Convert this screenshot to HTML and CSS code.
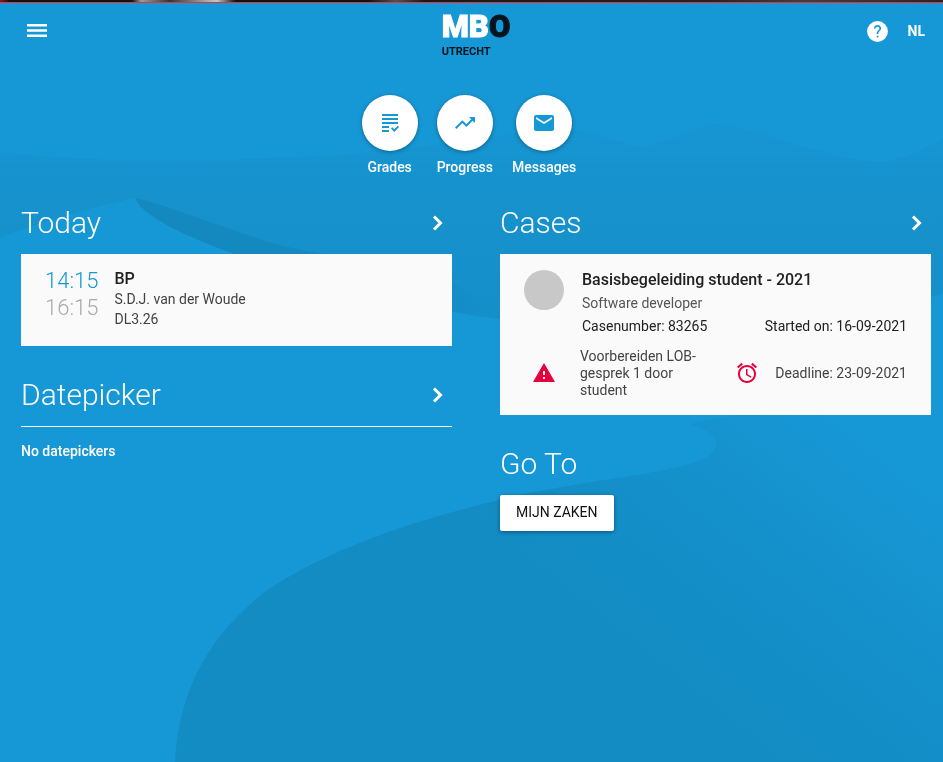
FILE: index.html
```html
<!DOCTYPE html>
<html lang="en">
<head>
<meta charset="utf-8">
<meta name="viewport" content="width=device-width, initial-scale=1">
<title>MBO Utrecht</title>
<link rel="stylesheet" href="styles.css">
</head>
<body>
<svg class="backdrop" viewBox="0 0 943 762" preserveAspectRatio="none" aria-hidden="true">
  <defs>
    <linearGradient id="ridge" x1="0" y1="124" x2="0" y2="320" gradientUnits="userSpaceOnUse">
      <stop offset="0" stop-color="#1694d0" stop-opacity=".6"/>
      <stop offset=".35" stop-color="#1692cd"/>
      <stop offset="1" stop-color="#158fca"/>
    </linearGradient>
    <linearGradient id="streak" x1="135" y1="0" x2="500" y2="0" gradientUnits="userSpaceOnUse">
      <stop offset="0" stop-color="#1389c0"/>
      <stop offset=".5" stop-color="#1389c0"/>
      <stop offset="1" stop-color="#158fca"/>
    </linearGradient>
    <linearGradient id="dune" x1="640" y1="660" x2="840" y2="410" gradientUnits="userSpaceOnUse">
      <stop offset="0" stop-color="#138bc3"/>
      <stop offset=".5" stop-color="#1490ca"/>
      <stop offset="1" stop-color="#1798d6"/>
    </linearGradient>
  </defs>
  <path fill="url(#ridge)" d="M0 151C90 164 220 162 350 154C430 148 510 130 575 130C600 131 625 147 645 146C672 143 692 124 718 124C760 128 820 158 880 162C905 160 925 148 943 139V294C800 326 620 334 500 319C380 304 210 252 135 198C90 208 40 222 0 238Z"/>
  <path fill="url(#streak)" d="M135 198C190 210 260 248 340 256C420 262 480 290 500 319C380 304 150 240 135 198Z"/>
  <path fill="url(#dune)" d="M175 762C179 690 208 638 262 594C330 545 440 513 520 495C590 480 640 477 690 464C725 454 725 434 690 424C760 405 870 410 943 430V762Z"/>
</svg>
<div class="strip"></div>
<header class="topbar">
  <button class="icon-button menu" aria-label="Menu">
    <svg width="20" height="14" viewBox="0 0 20 14" fill="#fff"><path d="M0 0h20v2.600H0zM0 5.200h20v2.600H0zM0 10.400h20V13H0z"/></svg>
  </button>
  <a class="logo" href="#" aria-label="MBO Utrecht">
    <span class="logo-name">MB<b>O</b></span>
    <span class="logo-city">UTRECHT</span>
  </a>
  <div class="tools">
    <button class="icon-button" aria-label="Help">
      <svg width="25" height="25" viewBox="0 0 24 24"><circle cx="12" cy="12" r="10" fill="#fff"/><path fill="#1798d6" d="M11.200 16h1.700v1.800h-1.700zM14.700 10.800l-.8.850c-.7.700-1 1.250-1 2.750h-1.700v-.5c0-1 .4-1.900 1.050-2.550l1.050-1.100c.3-.3.500-.7.500-1.200 0-1-.8-1.700-1.750-1.700s-1.750.8-1.750 1.700H8.600c0-1.900 1.550-3.400 3.450-3.400s3.450 1.500 3.450 3.400c0 .7-.3 1.300-.8 1.750z"/></svg>
    </button>
    <button class="language">NL</button>
  </div>
</header>

<nav class="shortcuts">
  <a class="shortcut" href="#">
    <span class="disc"><svg width="24" height="24" viewBox="0 0 24 24" fill="#1798d6"><path d="M4 3h16v2H4zM4 7h16v2H4zM4 11h16v2H4zM4 15h7v2H4zM4 19h7v2H4zM13 17.500l1.300-1.300 2 2 3.500-3.500 1.300 1.300-4.800 4.900z"/></svg></span>
    Grades
  </a>
  <a class="shortcut" href="#">
    <span class="disc"><svg width="24" height="24" viewBox="0 0 24 24" fill="#1798d6"><path d="M16 6l2.290 2.290-4.880 4.880-4-4L2 16.590 3.410 18l6-6 4 4 6.300-6.290L22 12V6z"/></svg></span>
    Progress
  </a>
  <a class="shortcut" href="#">
    <span class="disc"><svg width="24" height="24" viewBox="0 0 24 24" fill="#1798d6"><path d="M20 4H4c-1.100 0-2 .9-2 2v12c0 1.100.9 2 2 2h16c1.100 0 2-.9 2-2V6c0-1.100-.9-2-2-2zm0 4l-8 5-8-5V6l8 5 8-5v2z"/></svg></span>
    Messages
  </a>
</nav>

<main class="columns">
  <div class="column">
    <section>
      <div class="heading">
        <h2>Today</h2>
        <a href="#" class="more" aria-label="Open today"><svg width="12" height="16" viewBox="0 0 12 16" fill="none" stroke="#fff" stroke-width="3"><path d="M2 1.500L8.500 8L2 14.500"/></svg></a>
      </div>
      <article class="card lesson">
        <div class="times"><time class="start">14:15</time><time class="end">16:15</time></div>
        <div class="details"><h3>BP</h3><p>S.D.J. van der Woude</p><p>DL3.26</p></div>
      </article>
    </section>
    <section>
      <div class="heading">
        <h2>Datepicker</h2>
        <a href="#" class="more" aria-label="Open datepicker"><svg width="12" height="16" viewBox="0 0 12 16" fill="none" stroke="#fff" stroke-width="3"><path d="M2 1.500L8.500 8L2 14.500"/></svg></a>
      </div>
      <p class="empty">No datepickers</p>
    </section>
  </div>
  <div class="column">
    <section>
      <div class="heading">
        <h2>Cases</h2>
        <a href="#" class="more" aria-label="Open cases"><svg width="12" height="16" viewBox="0 0 12 16" fill="none" stroke="#fff" stroke-width="3"><path d="M2 1.500L8.500 8L2 14.500"/></svg></a>
      </div>
      <article class="card case">
        <div class="summary">
          <span class="avatar"></span>
          <div class="case-info">
            <h3>Basisbegeleiding student - 2021</h3>
            <p class="soft">Software developer</p>
            <div class="pair"><span>Casenumber: 83265</span><span>Started on: 16-09-2021</span></div>
          </div>
        </div>
        <div class="task">
          <svg class="alert" width="24" height="24" viewBox="0 0 24 24" fill="#e6003c"><path d="M1 20h22L12 1 1 20zm12-3h-2v-2h2v2zm0-4h-2V9h2v4z"/></svg>
          <p class="task-name">Voorbereiden LOB-gesprek 1 door student</p>
          <svg width="24" height="24" viewBox="0 0 24 24" fill="#e6003c"><path d="M22 4.720l-4.600-3.860-1.290 1.530 4.600 3.860L22 4.720zM7.880 2.390L6.600.860 2 4.710l1.290 1.530 4.590-3.850zM12.500 7H11v6l4.750 2.850.750-1.230-4-2.370V7zM12 3c-4.970 0-9 4.030-9 9s4.020 9 9 9c4.970 0 9-4.030 9-9s-4.030-9-9-9zm0 16c-3.870 0-7-3.130-7-7s3.130-7 7-7 7 3.130 7 7-3.130 7-7 7z"/></svg>
          <p class="deadline">Deadline: 23-09-2021</p>
        </div>
      </article>
    </section>
    <section>
      <div class="heading"><h2>Go To</h2></div>
      <button class="goto">MIJN ZAKEN</button>
    </section>
  </div>
</main>
</body>
</html>
```
FILE: styles.css
```css
* {
  box-sizing: border-box;
}

body {
  margin: 0;
  min-height: 100vh;
  background: #1798d6;
  color: #fff;
  font-family: Roboto, "Liberation Sans", sans-serif;
  font-size: 14px;
  line-height: 20px;
}

h2, h3, p {
  margin: 0;
}

button {
  border: 0;
  padding: 0;
  background: none;
  color: inherit;
  font: inherit;
  cursor: pointer;
}

a {
  color: inherit;
  text-decoration: none;
}

svg {
  display: block;
  flex: none;
}

.backdrop {
  position: fixed;
  inset: 0;
  z-index: -1;
  width: 100%;
  height: 100%;
}

.strip {
  height: 3px;
  border-bottom: 1px solid #e0333a;
  background: linear-gradient(90deg, #a01018 0, #17100d 1%, #17100d 14%, #a09a96 15%, #3a3330 18%, #b0aaa4 22%, #c8c4c0 23%, #17100d 25%, #17100d 39%, #5a504a 42%, #1f1614 45%, #2a201c 75%, #4a3c38 85%, #33201e 100%);
}

.topbar {
  display: grid;
  grid-template-columns: 1fr auto 1fr;
  align-items: center;
  height: 56px;
  padding: 0 18px 0 27px;
}

.icon-button {
  justify-self: start;
}

.logo {
  display: flex;
  flex-direction: column;
  padding-top: 4px;
  color: #fff;
  font-weight: 900;
}

.logo-name {
  font-size: 31px;
  line-height: 37px;
  -webkit-text-stroke: 1px currentColor;
}

.logo-name b {
  font-weight: 900;
}

.logo-name b,
.logo-city {
  color: #06151d;
}

.logo-city {
  font-size: 11px;
  font-weight: 700;
  line-height: 13px;
}

.tools {
  display: flex;
  justify-self: end;
  align-items: center;
  gap: 18px;
}

.language {
  font-weight: 700;
}

.shortcuts {
  display: flex;
  justify-content: center;
  gap: 19px;
  padding: 36px 5px 0 0;
}

.shortcut {
  display: flex;
  flex-direction: column;
  align-items: center;
  gap: 6px;
  font-weight: 500;
}

.disc {
  display: grid;
  place-items: center;
  width: 56px;
  height: 56px;
  border-radius: 50%;
  background: #fff;
  box-shadow: 0 1px 4px rgba(0, 0, 0, .35);
}

.columns {
  display: grid;
  grid-template-columns: 1fr 1fr;
  gap: 48px;
  padding: 26px 12px 24px 21px;
}

.column {
  display: flex;
  flex-direction: column;
  gap: 29px;
}

.heading {
  display: flex;
  align-items: center;
  justify-content: space-between;
  height: 40px;
  margin-bottom: 11px;
  padding-right: 8px;
}

.heading h2 {
  font-size: 30px;
  font-weight: 300;
  line-height: 40px;
}

.card {
  background: #fafafa;
  color: #212121;
}

.card h3 {
  font-size: 16px;
  font-weight: 500;
  line-height: 20px;
}

.lesson {
  display: flex;
  gap: 16px;
  padding: 13px 24px 17px;
}

.times {
  display: flex;
  flex-direction: column;
  font-size: 22px;
  font-weight: 300;
  line-height: 27px;
}

.start {
  color: #1798d6;
}

.end {
  color: #aaa;
}

.details {
  padding-top: 2px;
  color: #424242;
}

.details h3 {
  color: #212121;
}

.empty {
  padding-top: 14px;
  border-top: 1px solid #fff;
  font-weight: 500;
}

.case {
  padding: 16px 24px;
}

.summary {
  display: flex;
  gap: 18px;
}

.avatar {
  flex: none;
  width: 40px;
  height: 40px;
  border-radius: 50%;
  background: #c8c8c8;
}

.case-info {
  display: flex;
  flex: 1;
  flex-direction: column;
  gap: 3px;
}

.soft {
  color: #555;
}

.pair {
  display: flex;
  justify-content: space-between;
}

.task {
  display: flex;
  align-items: center;
  margin-top: 12px;
  color: #444;
  line-height: 17px;
}

.alert {
  margin: 0 24px 0 8px;
}

.task-name {
  width: 120px;
  margin-right: auto;
}

.deadline {
  margin-left: 16px;
}

.goto {
  height: 36px;
  padding: 0 16px 2px;
  border-radius: 2px;
  background: #fff;
  box-shadow: 0 1px 4px rgba(0, 0, 0, .4);
  color: #111;
}
```
